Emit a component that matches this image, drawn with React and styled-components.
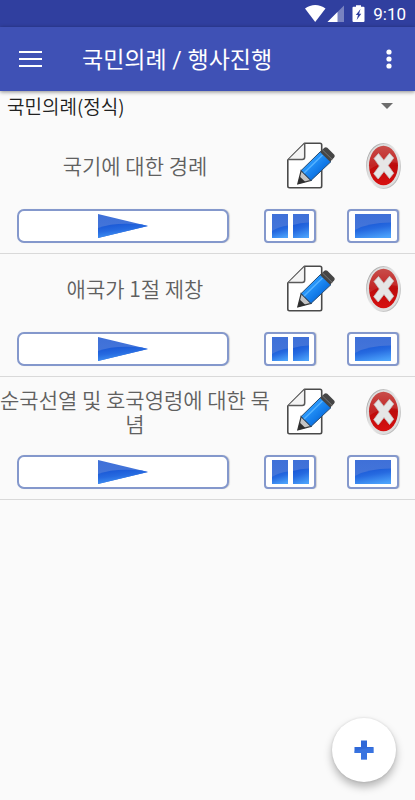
import React, { useState } from "react";
import styled, { createGlobalStyle } from "styled-components";

const GlobalStyle = createGlobalStyle`
  * {
    box-sizing: border-box;
  }

  body {
    margin: 0;
    background-color: #fafafa;
    font-family: Roboto, "Noto Sans CJK KR", sans-serif;
  }

  button {
    padding: 0;
    border: none;
    background: none;
    cursor: pointer;
  }

  svg {
    display: block;
  }
`;

const Screen = styled.div`
  min-height: 100vh;
`;

const StatusBar = styled.div`
  display: flex;
  align-items: center;
  justify-content: flex-end;
  height: 27px;
  padding-right: 9px;
  background-color: #303f9f;
`;

const Clock = styled.span`
  margin-left: 7px;
  color: #fff;
  font-size: 17px;
  font-weight: 400;
`;

const Toolbar = styled.header`
  display: flex;
  align-items: center;
  height: 64px;
  padding: 0 14px 0 19px;
  background-color: #3f51b5;
  box-shadow: 0 1px 4px rgba(0, 0, 0, 0.45);
`;

const ToolbarTitle = styled.h1`
  flex: 1;
  margin: 0 0 0 40px;
  padding-top: 4px;
  color: #fff;
  font-size: 23px;
  font-weight: 400;
  line-height: 32px;
`;

const SelectWrapper = styled.div`
  position: relative;
  margin-bottom: 12px;
`;

const ProgramSelect = styled.select`
  display: block;
  width: 100%;
  height: 28px;
  padding: 0 40px 0 7px;
  border: none;
  background: transparent;
  color: #212121;
  font-family: "Noto Sans CJK KR", sans-serif;
  font-size: 19px;
  font-weight: 350;
  appearance: none;
`;

const SelectArrow = styled.svg`
  position: absolute;
  top: 12px;
  right: 22px;
  pointer-events: none;
`;

const List = styled.ul`
  margin: 0;
  padding: 0;
  list-style: none;
`;

const Item = styled.li`
  padding-top: 11px;
  padding-bottom: 10px;
  border-bottom: 1px solid #d9d9d9;
`;

const ItemHead = styled.div`
  display: flex;
  align-items: center;
  height: 48px;
  margin-bottom: 19px;
  padding-right: 13px;
`;

const ItemTitle = styled.div`
  flex: 1;
  margin-right: 17px;
  padding-bottom: 2px;
  color: #606060;
  font-family: "Noto Sans CJK KR", sans-serif;
  font-size: 21px;
  font-weight: 350;
  line-height: 24px;
  text-align: center;
  word-break: break-all;
`;

const IconButton = styled.button`
  margin-left: ${(props) => props.$gap || 0}px;
`;

const Controls = styled.div`
  display: flex;
  padding: 0 16px 0 17px;
`;

const ControlButton = styled.button`
  display: flex;
  flex: ${(props) => (props.$wide ? "1" : "0 0 52px")};
  align-items: center;
  justify-content: center;
  height: 34px;
  margin-left: ${(props) => props.$gap || 0}px;
  border: 2px solid #8498cc;
  border-radius: ${(props) => (props.$wide ? 7 : 4)}px;
  background-color: #fff;
  box-shadow: 1px 0 1px rgba(0, 0, 0, 0.15);
`;

const AddButton = styled.button`
  position: fixed;
  right: 19px;
  bottom: 18px;
  display: flex;
  align-items: center;
  justify-content: center;
  width: 64px;
  height: 64px;
  border-radius: 50%;
  background-color: #fff;
  box-shadow: 0 5px 9px rgba(0, 0, 0, 0.28), 0 0 3px rgba(0, 0, 0, 0.12);
`;

// 여러 아이콘이 같이 쓰는 그라데이션
function Gradients() {
  return (
    <svg width="0" height="0" style={{ position: "absolute" }} aria-hidden="true">
      <defs>
        <linearGradient id="blueTop" x1="0" y1="0" x2="0" y2="1">
          <stop offset="0" stopColor="#3f70d8" />
          <stop offset="1" stopColor="#4678da" />
        </linearGradient>
        <linearGradient id="blueBottom" x1="0.300" y1="0" x2="0.700" y2="1">
          <stop offset="0" stopColor="#1a58d6" />
          <stop offset="0.4" stopColor="#266ae0" />
          <stop offset="1" stopColor="#4ba2fb" />
        </linearGradient>
        <linearGradient id="pencil" x1="0" y1="0" x2="1" y2="1">
          <stop offset="0.3" stopColor="#2a9bff" />
          <stop offset="0.7" stopColor="#0a6fe0" />
        </linearGradient>
        <linearGradient id="silver" x1="0" y1="0" x2="1" y2="1">
          <stop offset="0" stopColor="#8f8f8f" />
          <stop offset="0.5" stopColor="#f2f2f2" />
          <stop offset="1" stopColor="#a2a2a2" />
        </linearGradient>
        <linearGradient id="red" x1="0" y1="0" x2="0" y2="1">
          <stop offset="0" stopColor="#c23a36" />
          <stop offset="0.5" stopColor="#bd0c0c" />
          <stop offset="1" stopColor="#d81010" />
        </linearGradient>
      </defs>
    </svg>
  );
}

function StatusIcons() {
  return (
    <svg width="61" height="20" viewBox="0 0 61 20" fill="#fff">
      <path d="M0 4.500C6-.3 14.500-.3 20.500 4.500L10.200 18z" />
      <path d="M39 1.500V18H22.500z" opacity="0.35" />
      <path d="M32.500 8V18H22.500z" />
      <path d="M51 1.200h5v1.600h2.500q1 0 1 1V17q0 1-1 1h-10q-1 0-1-1V3.800q0-1 1-1H51z" />
      <path d="M55.500 5l-4.700 6h2.200l-1.300 5 4.600-6.200h-2.200z" fill="#303f9f" />
    </svg>
  );
}

function EditIcon() {
  return (
    <svg width="48" height="48" viewBox="0 0 48 48">
      <path
        d="M17.500 1.300H33q1.700 0 1.700 1.700v41q0 1.700-1.700 1.700H2.500Q.8 45.700.8 44V18z"
        fill="#fff"
        stroke="#4a4a4a"
        strokeWidth="1.600"
        strokeLinejoin="round"
      />
      <path
        d="M17.700 1.500V15q0 2.500-2.500 2.500H1.500"
        fill="#f4f4f4"
        stroke="#5a5a5a"
        strokeWidth="1.500"
      />
      <path d="M14.200 28.500L10.800 41.800 24 38.400z" fill="#c4c4c4" stroke="#3a3a3a" strokeWidth="1.200" />
      <path d="M12.700 34.500l-2 7.400 7.700-2z" fill="#2e2e2e" />
      <path d="M14.200 28.500L33.500 9.500 44 19.600 24 38.400z" fill="url(#pencil)" stroke="#264a70" />
      <path d="M17 31L35.500 13" stroke="#55b2ff" strokeWidth="1.500" />
      <path d="M33 10l4.300-4.200q1.500-1.200 3 0l6.800 6.600q1.200 1.500 0 3l-4 4.400z" fill="#454545" />
      <path d="M35.300 7.800L45.300 17.500" stroke="#777" />
    </svg>
  );
}

function DeleteIcon() {
  return (
    <svg width="36" height="48" viewBox="0 0 36 48">
      <ellipse cx="17.500" cy="24" rx="17.500" ry="23" fill="url(#silver)" />
      <ellipse cx="17.500" cy="24" rx="16.500" ry="22" fill="#dedede" />
      <ellipse cx="17.500" cy="23.500" rx="14.500" ry="19.800" fill="url(#red)" />
      <path d="M3 23.500C3 12 9.500 3.700 17.500 3.700S32 12 32 21Q17 18 3 28z" fill="#fff" opacity="0.1" />
      <path
        d="M8 16.500l4.500-5 5.300 6.700 5.700-7 4.200 4.800-5.500 7.500 5.500 7.700-4.200 5.300-5.500-7-5.800 7.500-4.500-5.300 5.600-7.700z"
        fill="#e6e6e6"
        stroke="#c4c4c4"
        strokeWidth="0.800"
        strokeLinejoin="round"
      />
    </svg>
  );
}

function PlayIcon() {
  return (
    <svg width="50" height="24" viewBox="0 0 50 24">
      <path d="M0 0L50 12 0 24z" fill="url(#blueTop)" />
      <path d="M0 14Q16 8 44 10.500L50 12 0 24z" fill="url(#blueBottom)" />
    </svg>
  );
}

function PauseIcon() {
  return (
    <svg width="37" height="24" viewBox="0 0 37 24">
      <path d="M0 0h16v24H0zM21 0h16v24H21z" fill="url(#blueTop)" />
      <path d="M0 17Q7 12.500 16 11.500V24H0z" fill="url(#blueBottom)" />
      <path d="M21 11Q28 8.500 37 8.500V24H21z" fill="url(#blueBottom)" />
    </svg>
  );
}

function StopIcon() {
  return (
    <svg width="36" height="24" viewBox="0 0 36 24">
      <path d="M0 0h36v24H0z" fill="url(#blueTop)" />
      <path d="M0 16Q13 8.500 36 8.500V24H0z" fill="url(#blueBottom)" />
    </svg>
  );
}

const ceremonies = [
  { id: 1, title: "국기에 대한 경례" },
  { id: 2, title: "애국가 1절 제창" },
  { id: 3, title: "순국선열 및 호국영령에 대한 묵념" },
];

function CeremonyItem({ title }) {
  return (
    <Item>
      <ItemHead>
        <ItemTitle>{title}</ItemTitle>
        <IconButton aria-label="수정">
          <EditIcon />
        </IconButton>
        <IconButton $gap={31} aria-label="삭제">
          <DeleteIcon />
        </IconButton>
      </ItemHead>
      <Controls>
        <ControlButton $wide aria-label="재생">
          <PlayIcon />
        </ControlButton>
        <ControlButton $gap={35} aria-label="일시정지">
          <PauseIcon />
        </ControlButton>
        <ControlButton $gap={31} aria-label="정지">
          <StopIcon />
        </ControlButton>
      </Controls>
    </Item>
  );
}

function App() {
  const [program, setProgram] = useState("formal");

  return (
    <Screen>
      <GlobalStyle />
      <Gradients />
      <StatusBar>
        <StatusIcons />
        <Clock>9:10</Clock>
      </StatusBar>
      <Toolbar>
        <IconButton aria-label="메뉴">
          <svg width="23" height="16" viewBox="0 0 23 16" fill="#fff">
            <path d="M0 0h23v2H0zM0 7h23v2H0zM0 14h23v2H0z" />
          </svg>
        </IconButton>
        <ToolbarTitle>국민의례 / 행사진행</ToolbarTitle>
        <IconButton aria-label="더보기">
          <svg width="24" height="20" viewBox="0 0 24 20" fill="#fff">
            <circle cx="12" cy="3" r="2.600" />
            <circle cx="12" cy="10" r="2.600" />
            <circle cx="12" cy="17" r="2.600" />
          </svg>
        </IconButton>
      </Toolbar>
      <SelectWrapper>
        <ProgramSelect
          aria-label="의례 종류"
          value={program}
          onChange={(e) => setProgram(e.target.value)}
        >
          <option value="formal">국민의례(정식)</option>
          <option value="short">국민의례(약식)</option>
        </ProgramSelect>
        <SelectArrow width="12" height="6" viewBox="0 0 12 6">
          <path d="M0 0h12L6 6z" fill="#6d6d6d" />
        </SelectArrow>
      </SelectWrapper>
      <List>
        {ceremonies.map((ceremony) => (
          <CeremonyItem key={ceremony.id} title={ceremony.title} />
        ))}
      </List>
      <AddButton aria-label="추가">
        <svg width="20" height="20" viewBox="0 0 20 20">
          <path d="M7 .5h6V7h6.500v6H13v6.500H7V13H.5V7H7z" fill="#2f68d8" />
          <path d="M.5 11Q9 8 19.500 7.500V13H13v6.500H7V13H.5z" fill="#3f7be6" opacity="0.6" />
        </svg>
      </AddButton>
    </Screen>
  );
}

export default App;
